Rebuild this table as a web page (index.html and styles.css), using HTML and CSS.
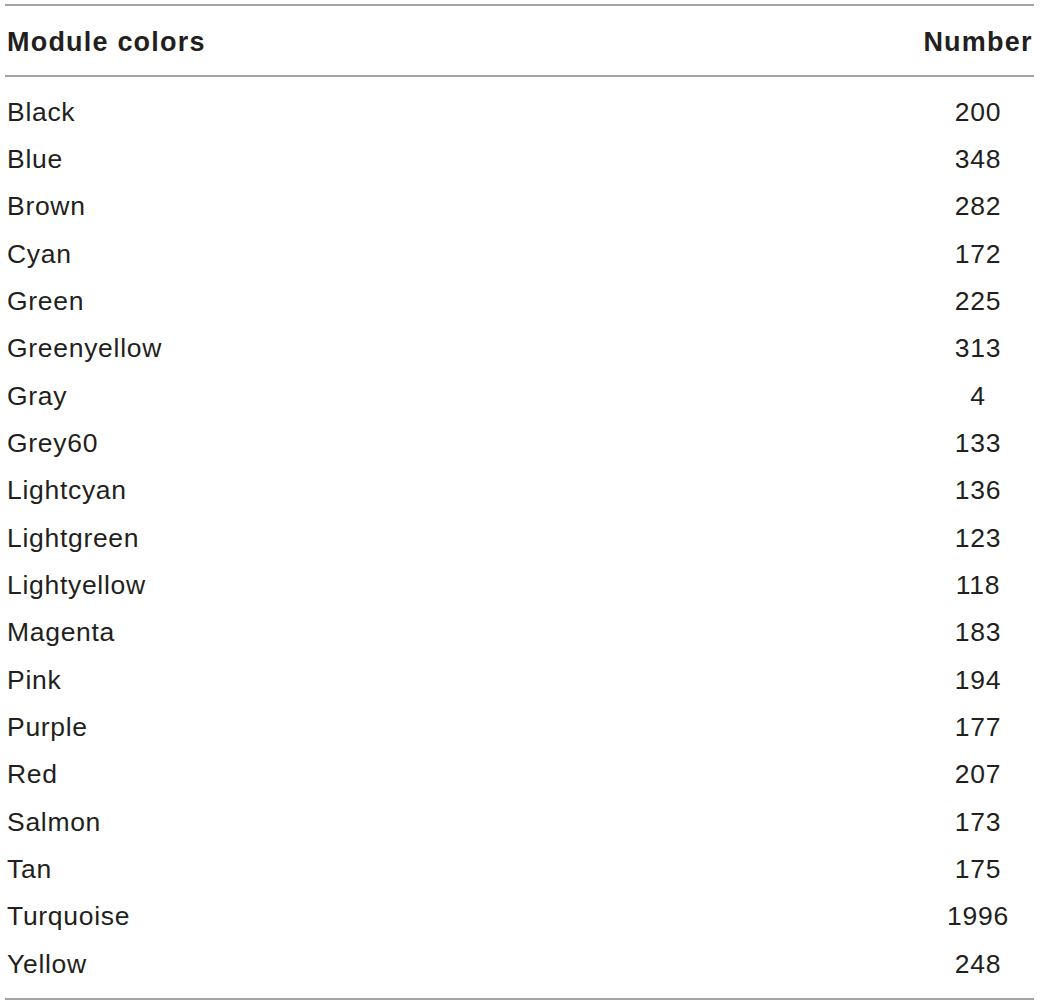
FILE: index.html
```html
<!DOCTYPE html>
<html>
<head>
<meta charset="utf-8">
<link rel="stylesheet" href="styles.css">
</head>
<body>
<div class="table">
  <div class="head">
    <div class="hcell name">Module colors</div>
    <div class="hcell num">Number</div>
  </div>
  <div class="body">
    <div class="cell name">Black</div><div class="cell num">200</div>
    <div class="cell name">Blue</div><div class="cell num">348</div>
    <div class="cell name">Brown</div><div class="cell num">282</div>
    <div class="cell name">Cyan</div><div class="cell num">172</div>
    <div class="cell name">Green</div><div class="cell num">225</div>
    <div class="cell name">Greenyellow</div><div class="cell num">313</div>
    <div class="cell name">Gray</div><div class="cell num">4</div>
    <div class="cell name">Grey60</div><div class="cell num">133</div>
    <div class="cell name">Lightcyan</div><div class="cell num">136</div>
    <div class="cell name">Lightgreen</div><div class="cell num">123</div>
    <div class="cell name">Lightyellow</div><div class="cell num">118</div>
    <div class="cell name">Magenta</div><div class="cell num">183</div>
    <div class="cell name">Pink</div><div class="cell num">194</div>
    <div class="cell name">Purple</div><div class="cell num">177</div>
    <div class="cell name">Red</div><div class="cell num">207</div>
    <div class="cell name">Salmon</div><div class="cell num">173</div>
    <div class="cell name">Tan</div><div class="cell num">175</div>
    <div class="cell name">Turquoise</div><div class="cell num">1996</div>
    <div class="cell name">Yellow</div><div class="cell num">248</div>
  </div>
</div>
</body>
</html>
```
FILE: styles.css
```css
html, body {
  margin: 0;
  padding: 0;
  background: #ffffff;
}
body {
  padding: 4px 6px 0 5px;
  font-family: "Liberation Sans", Arial, Helvetica, sans-serif;
  color: #231f20;
}
.table {
  width: 1029px;
}
.head {
  display: grid;
  grid-template-columns: 1fr 112px;
  height: 69px;
  align-items: center;
  border-top: 2px solid #a3a3a3;
  border-bottom: 2px solid #a3a3a3;
}
.hcell {
  font-size: 27px;
  font-weight: bold;
  letter-spacing: 1.2px;
  line-height: 32px;
  padding-top: 2px;
}
.hcell.name {
  padding-left: 2px;
}
.hcell.num {
  text-align: center;
}
.body {
  display: grid;
  grid-template-columns: 1fr 112px;
  grid-auto-rows: 47.33px;
  align-items: center;
  padding: 11px 0 11px;
  border-bottom: 2px solid #a3a3a3;
}
.cell {
  font-size: 26.5px;
  letter-spacing: 0.7px;
  line-height: 30px;
}
.cell.name {
  padding-left: 2px;
}
.cell.num {
  text-align: center;
}
```
